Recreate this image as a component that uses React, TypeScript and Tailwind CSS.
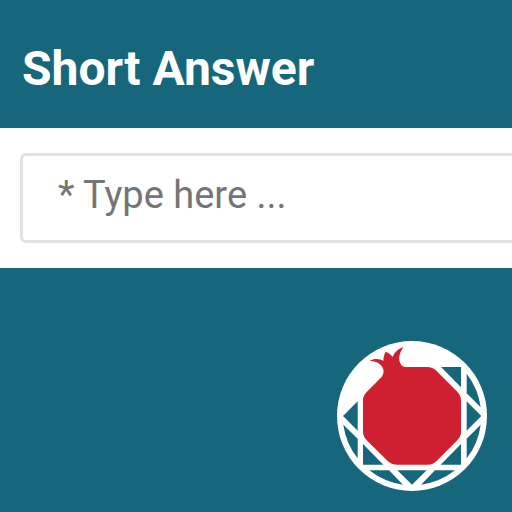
function PomegranateLogo() {
  return (
    <svg viewBox="15 15 450 450" className="size-[150px]" role="img" aria-label="Pomegranate logo">
      <circle cx="240" cy="240" r="225" fill="#fff" />
      <g fill="#16677c">
        <path d="M327 93H387V154Z" />
        <path d="M404 113A208 208 0 0 1 446 214L404 172Z" />
        <path d="M404 196L448 240L404 284Z" />
        <path d="M404 308L446 266A208 208 0 0 1 404 367Z" />
        <path d="M387 324V386H326Z" />
        <path d="M309 403H369A208 208 0 0 1 267 446Z" />
        <path d="M196 403H284L240 446Z" />
        <path d="M171 403H112A208 208 0 0 0 213 446Z" />
        <path d="M93 324L154 386H93Z" />
        <path d="M77 308L34 266A208 208 0 0 0 77 367Z" />
        <path d="M77 196V284L33 240Z" />
      </g>
      <path
        fill="#cf2032"
        d="M148 124C158 112 156 98 147 88C138 78 127 75 113 74C127 67 143 68 154 75C154 65 157 53 161 47C170 50 178 57 182 63C187 50 198 38 214 34C202 52 198 68 205 82C208 90 214 93 222 93H285Q302 93 313 104L376 167Q387 178 387 195V288Q387 302 376 313L314 375Q303 386 288 386H195Q178 386 167 375L104 313Q93 302 93 286V193Q93 179 104 168Z"
      />
    </svg>
  );
}

export default function App() {
  return (
    <main className="flex min-h-screen flex-col overflow-hidden bg-[#16677c] font-[Roboto,sans-serif]">
      <header className="flex h-32 items-center px-[22px] pt-2.5">
        <h1 className="text-5xl font-bold text-white">
          <label htmlFor="answer">Short Answer</label>
        </h1>
      </header>
      <section className="bg-white py-[25px] pl-5">
        <input
          id="answer"
          type="text"
          placeholder="* Type here ..."
          className="block h-[90px] w-full rounded-l-md border-[3px] border-r-0 border-[#e2e2e2] bg-white pb-1.5 pl-[35px] text-[38px] text-[#757575] outline-none placeholder:text-[#757575]"
        />
      </section>
      <footer className="mt-auto flex justify-end pr-[25px] pb-[21px]">
        <PomegranateLogo />
      </footer>
    </main>
  );
}
